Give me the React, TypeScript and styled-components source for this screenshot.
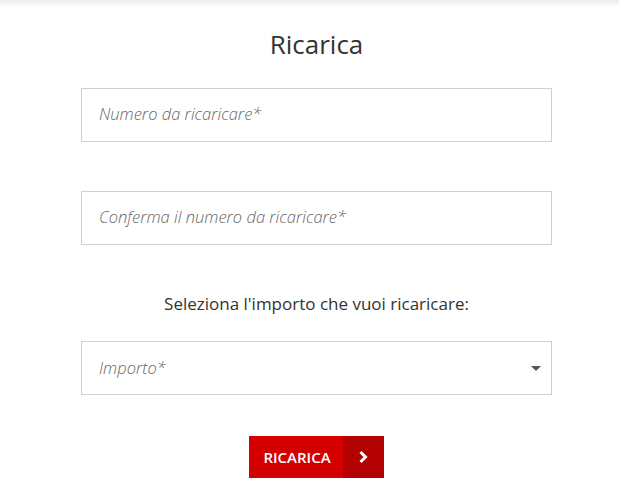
import React from 'react';
import styled, { createGlobalStyle } from 'styled-components';

const GlobalStyle = createGlobalStyle`
  body {
    margin: 0;
    background: #fff;
    font-family: 'Open Sans', 'Liberation Sans', sans-serif;
    color: #333;
  }
`;

const Page = styled.div`
  position: relative;
  padding: 0 67px 0 81px;
  &::before {
    content: '';
    position: absolute;
    top: 0;
    left: 0;
    right: 0;
    height: 7px;
    background: linear-gradient(#ececec, rgba(255, 255, 255, 0));
  }
`;

const Form = styled.form`
  display: flex;
  flex-direction: column;
  align-items: center;
`;

const Title = styled.h1`
  margin: 26px 0 0;
  font-size: 26px;
  font-weight: 400;
  line-height: 36px;
  color: #333;
`;

const Field = styled.div<{ $top: number }>`
  position: relative;
  box-sizing: border-box;
  width: 100%;
  height: 54px;
  margin-top: ${(p) => p.$top}px;
  border: 1px solid #cfcfcf;
  background: #fff;
`;

const Input = styled.input`
  box-sizing: border-box;
  width: 100%;
  height: 100%;
  border: 0;
  outline: none;
  padding: 0 17px 3px;
  font-family: inherit;
  font-size: 16.5px;
  font-weight: 300;
  color: #333;
  background: transparent;
  &::placeholder {
    color: #666;
    font-style: italic;
  }
`;

const SelectText = styled.div`
  display: flex;
  align-items: center;
  height: 100%;
  box-sizing: border-box;
  padding: 0 17px 2px;
  font-size: 16.5px;
  font-weight: 300;
  font-style: italic;
  color: #666;
`;

const Caret = styled.span`
  position: absolute;
  right: 10px;
  top: 24px;
  width: 0;
  height: 0;
  border-left: 5px solid transparent;
  border-right: 5px solid transparent;
  border-top: 5px solid #555;
`;

const Label = styled.p`
  margin: 47px 0 0;
  font-size: 17px;
  line-height: 24px;
  color: #333;
`;

const Button = styled.button`
  display: flex;
  align-items: stretch;
  height: 42px;
  margin-top: 41px;
  padding: 0;
  border: 0;
  background: #d40000;
  color: #fff;
  font-family: inherit;
  cursor: pointer;
`;

const ButtonText = styled.span`
  display: flex;
  align-items: center;
  padding: 0 12px 1px 14px;
  font-size: 15px;
  font-weight: 600;
`;

const ButtonIcon = styled.span`
  display: flex;
  align-items: center;
  justify-content: center;
  width: 41px;
  background: #b30000;
`;

export default function App() {
  return (
    <Page>
      <GlobalStyle />
      <Form onSubmit={(e) => e.preventDefault()}>
        <Title>Ricarica</Title>
        <Field $top={26}>
          <Input placeholder='Numero da ricaricare*' />
        </Field>
        <Field $top={49}>
          <Input placeholder='Conferma il numero da ricaricare*' />
        </Field>
        <Label>Seleziona l'importo che vuoi ricaricare:</Label>
        <Field $top={25}>
          <SelectText>Importo*</SelectText>
          <Caret />
        </Field>
        <Button type='submit'>
          <ButtonText>RICARICA</ButtonText>
          <ButtonIcon>
            <svg width='10' height='14' viewBox='0 0 10 14'>
              <polyline points='2.5,2 7.5,7 2.5,12' fill='none' stroke='#fff' strokeWidth='3' />
            </svg>
          </ButtonIcon>
        </Button>
      </Form>
    </Page>
  );
}
